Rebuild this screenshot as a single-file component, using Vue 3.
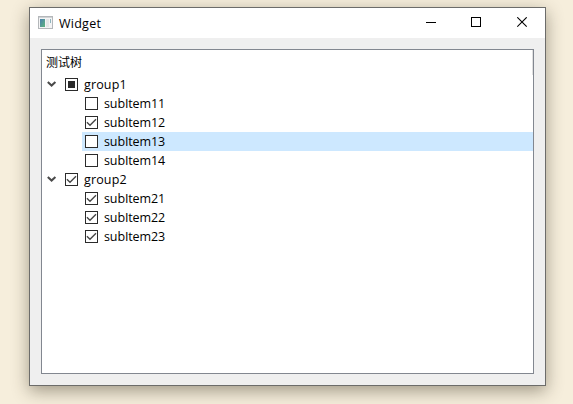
<script setup>
const groups = [
  {
    name: 'group1',
    state: 'partial',
    items: [
      { name: 'subItem11', checked: false },
      { name: 'subItem12', checked: true },
      { name: 'subItem13', checked: false, selected: true },
      { name: 'subItem14', checked: false },
    ],
  },
  {
    name: 'group2',
    state: 'checked',
    items: [
      { name: 'subItem21', checked: true },
      { name: 'subItem22', checked: true },
      { name: 'subItem23', checked: true },
    ],
  },
]
</script>

<template>
  <main class="desktop">
    <section class="window">
      <header class="titlebar">
        <svg class="app-icon" width="15" height="13" viewBox="0 0 15 13">
          <defs>
            <linearGradient id="pane" x1="0" y1="0" x2="1" y2="1">
              <stop offset="0" stop-color="#4a7fae" />
              <stop offset="1" stop-color="#5fb57c" />
            </linearGradient>
          </defs>
          <rect x=".5" y=".5" width="14" height="12" fill="#f4f4f5" stroke="#b4b7ba" />
          <rect x="1" y="1" width="13" height="1" fill="#d0d3d5" />
          <rect x="2" y="3" width="5" height="8" fill="url(#pane)" />
          <rect x="8" y="3" width="3" height="8" fill="#e4e6e7" />
          <rect x="12" y="3" width="1" height="4" fill="#8eb4bd" />
        </svg>
        <span class="title">Widget</span>
        <div class="controls">
          <svg class="minimize" width="11" height="11"><path d="M0 5.5H10" stroke="#000" /></svg>
          <svg width="11" height="11"><rect x=".5" y=".5" width="9" height="9" fill="none" stroke="#000" /></svg>
          <svg width="11" height="11"><path d="M.3 .3L9.7 9.7M9.7 .3L.3 9.7" stroke="#000" stroke-width="1.1" /></svg>
        </div>
      </header>
      <div class="client">
        <div class="tree">
          <div class="tree-header"><span>测试树</span></div>
          <template v-for="g in groups" :key="g.name">
            <div class="row">
              <svg class="arrow" width="10" height="7" viewBox="0 0 10 7">
                <path d="M.8 1L4.6 4.6L8.4 1" fill="none" stroke="#4a4a4a" stroke-width="2" />
              </svg>
              <svg class="box" width="13" height="13" viewBox="0 0 13 13">
                <rect x=".5" y=".5" width="12" height="12" fill="#fff" stroke="#2b2b2b" />
                <rect v-if="g.state === 'partial'" x="3" y="3" width="7" height="7" fill="#2b2b2b" />
                <path v-else d="M1.9 6.2L5 9.2L11 3.2" fill="none" stroke="#444" stroke-width="1.35" />
              </svg>
              <span class="label">{{ g.name }}</span>
            </div>
            <div v-for="i in g.items" :key="i.name" class="row child" :class="{ selected: i.selected }">
              <svg class="box" width="13" height="13" viewBox="0 0 13 13">
                <rect x=".5" y=".5" width="12" height="12" fill="#fff" stroke="#2b2b2b" />
                <path v-if="i.checked" d="M1.9 6.2L5 9.2L11 3.2" fill="none" stroke="#444" stroke-width="1.35" />
              </svg>
              <span class="label">{{ i.name }}</span>
            </div>
          </template>
        </div>
      </div>
    </section>
  </main>
</template>

<style>
body {
  margin: 0;
  overflow: hidden;
}
</style>

<style scoped>
.desktop {
  box-sizing: border-box;
  width: 573px;
  height: 404px;
  padding: 7px 0 0 29px;
  background: #f6eedc;
  overflow: hidden;
  font: 12.5px/19px "Open Sans", "Noto Sans CJK SC", sans-serif;
  color: #000;
}
.window {
  box-sizing: border-box;
  display: flex;
  flex-direction: column;
  width: 517px;
  height: 379px;
  border: 1px solid #6c6c6a;
  background: #efefef;
  box-shadow: 0 5px 16px rgba(50, 44, 26, 0.44);
}
.titlebar {
  display: flex;
  flex: none;
  align-items: center;
  box-sizing: border-box;
  height: 30px;
  padding: 0 17px 0 8px;
  background: #fff;
}
.app-icon {
  margin-top: -2px;
}
.title {
  margin-left: 6px;
  letter-spacing: 0.25px;
}
.controls {
  display: flex;
  gap: 35px;
  margin: -1px 0 0 auto;
}
.minimize {
  margin-right: -1px;
}
.client {
  box-sizing: border-box;
  flex: 1;
  padding: 11px;
}
.tree {
  box-sizing: border-box;
  width: 493px;
  height: 325px;
  border: 1px solid #828790;
  background: #fff;
}
.tree-header {
  box-sizing: border-box;
  height: 25px;
  padding: 2px 0 0 4px;
  border-right: 1px solid #e0e0e0;
  font-family: "Noto Sans CJK SC", sans-serif;
  font-size: 12px;
}
.row {
  display: flex;
  box-sizing: border-box;
  height: 19px;
  padding-left: 5px;
}
.arrow {
  margin: 6px 8px 0 0;
}
.box {
  flex: none;
  margin-top: 3px;
}
.label {
  margin-left: 6px;
  letter-spacing: 0.15px;
}
.child {
  margin-left: 40px;
  padding-left: 3px;
}
.child .label {
  letter-spacing: -0.12px;
}
.selected {
  background: #cde8ff;
}
</style>
